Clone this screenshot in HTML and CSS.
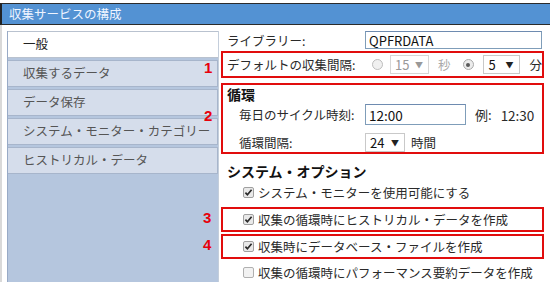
FILE: index.html
```html
<!DOCTYPE html>
<html lang="ja">
<head>
<meta charset="utf-8">
<link rel="stylesheet" href="styles.css">
</head>
<body>
<div class="title">収集サービスの構成</div>
<div class="main">
  <div class="sidewrap">
    <div class="side">
      <div class="tab active">一般</div>
      <div class="tab">収集するデータ</div>
      <div class="tab">データ保存</div>
      <div class="tab">システム・モニター・カテゴリー</div>
      <div class="tab">ヒストリカル・データ</div>
    </div>
  </div>
  <div class="content">
    <div class="row lib">
      <span class="lbl">ライブラリー:</span>
      <span class="input wide">QPFRDATA</span>
    </div>
    <div class="box b1">
      <span class="num n1">1</span>
      <span class="lbl1">デフォルトの収集間隔:</span>
      <span class="radio"></span>
      <span class="select dis s15"><span>15</span><span class="arr">▼</span></span>
      <span class="unit dim">秒</span>
      <span class="radio on r2"></span>
      <span class="select s5"><span>5</span><span class="arr">▼</span></span>
      <span class="unit u2">分</span>
    </div>
    <div class="box b2">
      <span class="num n2">2</span>
      <div class="h h1">循環</div>
      <div class="row sub r1">
        <span class="lbl2">毎日のサイクル時刻:</span>
        <span class="input time">12:00</span>
        <span class="ex">例:</span><span class="exv">12:30</span>
      </div>
      <div class="row sub r2row">
        <span class="lbl2">循環間隔:</span>
        <span class="select s24"><span>24</span><span class="arr">▼</span></span>
        <span class="hr">時間</span>
      </div>
    </div>
    <div class="h h2">システム・オプション</div>
    <div class="chk c1"><span class="cb on"><svg viewBox="0 0 11 11" width="11" height="11"><path d="M2.4 5.6 L4.4 7.8 L8.6 2.8" fill="none" stroke="#2b2b2b" stroke-width="1.7"/></svg></span>システム・モニターを使用可能にする</div>
    <div class="box chk cbox b3"><span class="num n3">3</span><span class="cb on"><svg viewBox="0 0 11 11" width="11" height="11"><path d="M2.4 5.6 L4.4 7.8 L8.6 2.8" fill="none" stroke="#2b2b2b" stroke-width="1.7"/></svg></span>収集の循環時にヒストリカル・データを作成</div>
    <div class="box chk cbox b4"><span class="num n4">4</span><span class="cb on"><svg viewBox="0 0 11 11" width="11" height="11"><path d="M2.4 5.6 L4.4 7.8 L8.6 2.8" fill="none" stroke="#2b2b2b" stroke-width="1.7"/></svg></span>収集時にデータベース・ファイルを作成</div>
    <div class="chk c5"><span class="cb"></span>収集の循環時にパフォーマンス要約データを作成</div>
  </div>
</div>
</body>
</html>
```

FILE: styles.css
```css
* { box-sizing: border-box; }
html, body { margin: 0; padding: 0; }
body {
  width: 550px;
  height: 282px;
  overflow: hidden;
  background: #fff;
  font-family: "Noto Sans CJK JP", "Noto Sans", sans-serif;
  font-size: 12.5px;
  color: #2a2a2a;
}
.title {
  margin-top: 3px;
  height: 22px;
  border-top: 1px solid #2b2b2b;
  border-bottom: 1px solid #2b2b2b;
  border-left: 2px solid #222;
  background: #5392d3;
  color: #eef4ff;
  font-size: 12.5px;
  line-height: 20px;
  padding-left: 7px;
}
.main {
  display: flex;
  height: 257px;
  border-left: 2px solid #d9d9d9;
}
.sidewrap {
  padding-left: 5px;
  padding-top: 6px;
}
.side {
  width: 212px;
  height: 100%;
  background: #b5c6de;
  border-left: 1px solid #98aac6;
  border-right: 1px solid #c4cedb;
  display: flex;
  flex-direction: column;
  gap: 2px;
}
.tab {
  height: 27px;
  border: 1px solid #a7b5cb;
  border-left: none;
  background: #d5ddeb;
  color: #555;
  display: flex;
  align-items: center;
  font-family: "Liberation Sans", "Noto Sans CJK JP", sans-serif;
  line-height: 14px;
  padding-left: 15px;
  font-size: 12.5px;
}
.tab.active {
  background: #fff;
  color: #222;
  border-color: #b9c2cf;
  border-right: none;
}
.content {
  flex: 1;
  padding-left: 2px;
  padding-right: 8px;
}
.row { display: flex; align-items: center; }
.lib { margin-top: 6px; height: 18px; }
.lbl { width: 144px; padding-left: 6px; }
.input {
  display: inline-flex;
  align-items: center;
  border: 1px solid #7f9db9;
  border-top-color: #6e8bb0;
  background: #fff;
  color: #111;
  font-size: 13px;
  padding-left: 3px;
}
.wide { width: 177px; height: 18px; }
.box {
  position: relative;
  border: 2px solid #e10d0d;
}
.num {
  position: absolute;
  font-family: "Liberation Sans", Arial, sans-serif;
  font-weight: bold;
  font-size: 15px;
  line-height: 10px;
  height: 11px;
  color: #e8000b;
  left: -20px;
}
.n1 { top: 10px; left: -19px; }
.n2 { top: 26px; left: -19px; }
.n3 { top: 4px; }
.n4 { top: 4px; }
.b1 {
  margin-top: 2px;
  height: 27px;
  display: flex;
  align-items: center;
  padding-left: 4px;
}
.lbl1 { width: 145px; }
.radio {
  width: 11px;
  height: 11px;
  border-radius: 50%;
  border: 1px solid #bdbdbd;
  background: #f0f0f0;
  position: relative;
}
.radio.on { border-color: #a9a9a9; background: #ececec; }
.radio.on::after {
  content: "";
  position: absolute;
  left: 2.5px;
  top: 2.5px;
  width: 4px;
  height: 4px;
  border-radius: 50%;
  background: #5a5a5a;
}
.r2 { margin-left: 12px; }
.select {
  display: inline-flex;
  align-items: center;
  justify-content: space-between;
  height: 19px;
  border: 1px solid #c9c9c9;
  background: #fff;
  color: #111;
  font-size: 13px;
  padding: 0 5px 0 4px;
}
.select .arr { font-size: 8px; color: #222; }
.select.dis { color: #999; border-color: #d6d6d6; }
.select.dis .arr { color: #999; }
.s15 { width: 39px; margin-left: 7px; }
.s5 { width: 37px; margin-left: 9px; padding-left: 5px; }
.unit { margin-left: 9px; }
.dim { color: #aaa; }
.u2 { margin-left: 10px; }
.b2 {
  margin-top: 5px;
  height: 71px;
  padding-top: 1px;
}
.h {
  font-weight: bold;
  font-size: 14px;
  color: #111;
  padding-left: 6px;
  line-height: 16px;
}
.h1 { padding-left: 4px; }
.sub { padding-left: 16px; }
.lbl2 { width: 126px; }
.r1 { margin-top: 2px; height: 21px; }
.time { width: 101px; height: 21px; font-size: 13.5px; }
.ex { margin-left: 9px; font-size: 13px; }
.exv { margin-left: 9px; font-size: 13.5px; }
.r2row { margin-top: 8px; height: 19px; }
.s24 { width: 40px; }
.hr { margin-left: 6px; }
.h2 { margin-top: 8px; line-height: 18px; }
.chk {
  display: flex;
  align-items: center;
  height: 22px;
  padding-left: 22px;
}
.c1 { margin-top: 1px; }
.cbox { height: 25px; padding-left: 20px; }
.b3 { margin-top: 4px; }
.b4 { margin-top: 2px; }
.c5 { margin-top: 2px; }
.cb {
  width: 11px;
  height: 11px;
  border: 1px solid #a0a0a0;
  border-radius: 2px;
  background: #e9e9e9;
  margin-right: 4px;
  display: inline-flex;
  align-items: center;
  justify-content: center;
  overflow: hidden;
  flex-shrink: 0;
}
.cb svg { display: block; flex-shrink: 0; }
.cb:not(.on) { background: #f2f2f2; border-color: #b0b0b0; }
```
